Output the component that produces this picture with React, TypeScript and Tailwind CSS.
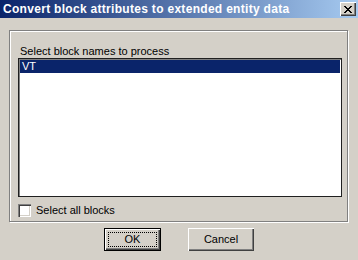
import React from "react";

export default function App() {
  return (
    <div
      className="w-[358px] h-[260px] bg-[#d4d0c8] flex flex-col overflow-hidden"
      style={{ fontFamily: '"Liberation Sans", Arial, sans-serif' }}
    >
      {/* Title bar */}
      <div className="h-[18px] flex items-center justify-between bg-[linear-gradient(to_right,#0a246a,#a6caf0)] pl-[3px] pr-[2px]">
        <span className="text-white font-bold text-[12px] tracking-[0.3px] leading-none whitespace-nowrap">
          Convert block attributes to extended entity data
        </span>
        <div className="w-[16px] h-[14px] bg-[#d4d0c8] flex items-center justify-center shadow-[inset_1px_1px_#ffffff,inset_-1px_-1px_#404040,inset_-2px_-2px_#808080]">
          <svg width="8" height="7" viewBox="0 0 8 7">
            <path d="M0 0h2v1h-2zM6 0h2v1h-2zM1 1h2v1h-2zM5 1h2v1h-2zM2 2h4v1h-4zM3 3h2v1h-2zM2 4h4v1h-4zM1 5h2v1h-2zM5 5h2v1h-2zM0 6h2v1h-2zM6 6h2v1h-2z" fill="#000" />
          </svg>
        </div>
      </div>

      {/* Group box */}
      <div className="ml-[9px] mt-[12px] w-[339px] h-[192px] border border-[#808080] shadow-[inset_1px_1px_#ffffff,1px_1px_#ffffff] flex flex-col pl-[8px] pr-[7px]">
        <div className="mt-[14px] ml-[2px] text-[11px] leading-[13px] text-black whitespace-nowrap">
          Select block names to process
        </div>
        <div className="mt-0 h-[139px] w-[324px] bg-white border border-[#202020] shadow-[inset_1px_1px_#808080] p-[1px]">
          <div className="h-[13px] bg-[#0a246a] text-white text-[11px] leading-[13px] pl-[2px]">
            VT
          </div>
        </div>
        <div className="mt-[7px] flex items-center">
          <div className="w-[13px] h-[13px] bg-white shadow-[inset_1px_1px_#808080,inset_2px_2px_#404040,inset_-1px_-1px_#ffffff,inset_-2px_-2px_#d4d0c8]" />
          <span className="ml-[5px] text-[11px] leading-[13px] text-black">Select all blocks</span>
        </div>
      </div>

      {/* Buttons */}
      <div className="mt-[6px] flex pl-[104px] gap-[27px]">
        <div className="w-[57px] h-[23px] border border-black bg-[#d4d0c8] shadow-[inset_1px_1px_#ffffff,inset_-1px_-1px_#404040,inset_-2px_-2px_#808080] p-[3px]">
          <div className="w-full h-full border border-dotted border-black flex items-center justify-center text-[11px] text-black leading-none">
            OK
          </div>
        </div>
        <div className="w-[66px] h-[23px] bg-[#d4d0c8] shadow-[inset_1px_1px_#ffffff,inset_-1px_-1px_#404040,inset_-2px_-2px_#808080] flex items-center justify-center text-[11px] text-black leading-none">
          Cancel
        </div>
      </div>
    </div>
  );
}
